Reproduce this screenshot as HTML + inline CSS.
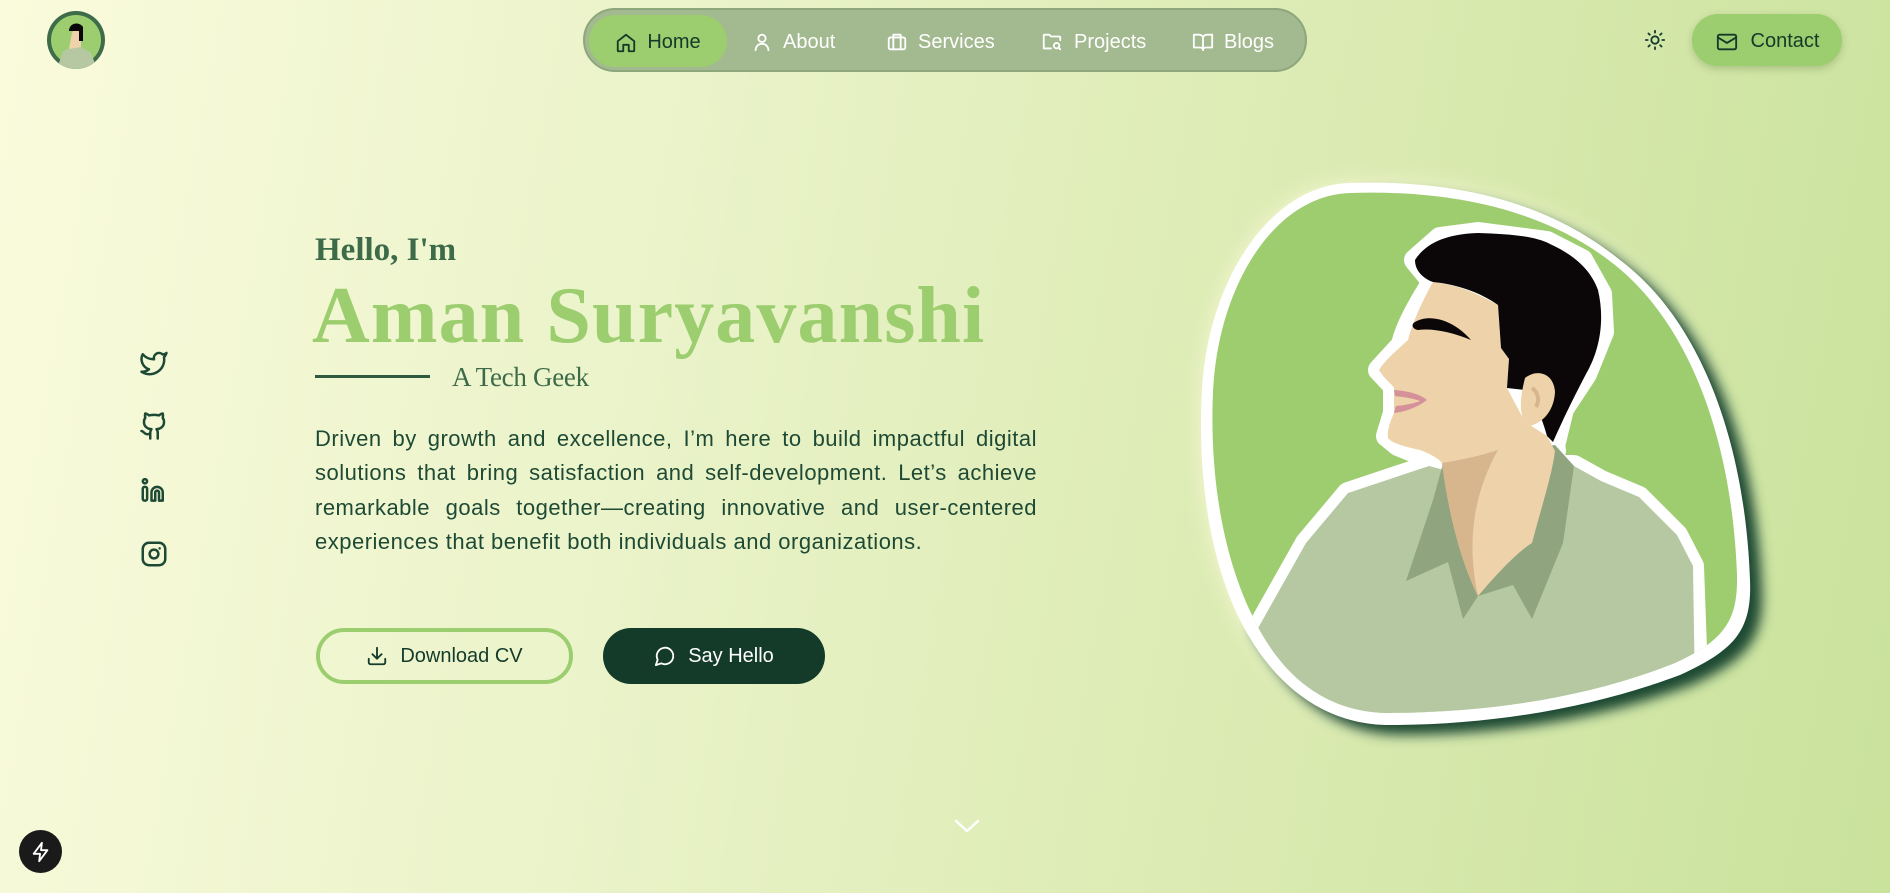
<!DOCTYPE html>
<html><head><meta charset="utf-8"><style>
*{margin:0;padding:0;box-sizing:border-box}
body{width:1890px;height:893px;overflow:hidden;position:relative;font-family:"Liberation Sans",sans-serif;background:linear-gradient(100deg,#fafbdc 0%,#eaf3c9 35%,#dcebb3 65%,#c9e29c 100%)}
.abs{position:absolute}
.nav{left:583px;top:8px;width:724px;height:64px;border-radius:32px;background:#a3b98f;border:2px solid #8ea67c;}
.nav .it{position:absolute;top:2px;height:60px;display:flex;align-items:center;gap:10px;color:#fff;font-size:20px}
.home{left:4px;top:5px!important;height:52px!important;width:138px;border-radius:26px;background:#9ccd6e;color:#143a2a!important;justify-content:center;padding-top:3px}
svg.i{fill:none;stroke:currentColor;stroke-width:2;stroke-linecap:round;stroke-linejoin:round}
.serif{font-family:"Liberation Serif",serif}
</style></head><body>
<div class="abs" style="left:47px;top:11px;width:58px;height:58px;border-radius:50%;background:#3e6b4a;overflow:hidden">
<svg width="58" height="58" viewBox="0 0 58 58"><circle cx="29" cy="29" r="25" fill="#9ccd6e"/><path d="M10 58 L16 40 L26 36 L34 36 L44 42 L50 58Z" fill="#b5c8a2"/><path d="M22 38 C24 28 24 24 26 20 L34 20 L34 36Z" fill="#eed3aa"/><path d="M22 20 C22 12 32 10 36 16 L36 30 L32 30 L32 20Z" fill="#0b0608"/></svg></div>

<div class="abs nav">
 <div class="it home"><svg class="i" width="22" height="22" viewBox="0 0 24 24"><path d="M3 10l9-7 9 7v10a1 1 0 0 1-1 1h-5v-7H9v7H4a1 1 0 0 1-1-1z"/></svg>Home</div>
 <div class="it" style="left:166px"><svg class="i" width="22" height="22" viewBox="0 0 24 24"><circle cx="12" cy="8" r="4"/><path d="M5 21c0-4 3-7 7-7s7 3 7 7"/></svg>About</div>
 <div class="it" style="left:301px"><svg class="i" width="22" height="22" viewBox="0 0 24 24"><rect x="3" y="7" width="18" height="13" rx="2"/><path d="M8 7V4h8v3M8 7v13M16 7v13"/></svg>Services</div>
 <div class="it" style="left:455px"><svg class="i" width="24" height="22" viewBox="0 0 24 24"><path d="M3 5a1 1 0 0 1 1-1h5l2 2h9a1 1 0 0 1 1 1v3M3 5v14h8"/><circle cx="17" cy="16" r="3"/><path d="M19 18l2 2"/></svg>Projects</div>
 <div class="it" style="left:607px"><svg class="i" width="22" height="22" viewBox="0 0 24 24"><path d="M2 4h6a4 4 0 0 1 4 4v13a3 3 0 0 0-3-3H2zM22 4h-6a4 4 0 0 0-4 4v13a3 3 0 0 1 3-3h7z"/></svg>Blogs</div>
</div>

<svg class="abs i" style="left:1644px;top:29px;color:#143a2a" width="22" height="22" viewBox="0 0 24 24"><circle cx="12" cy="12" r="4"/><path d="M12 2v2M12 20v2M4.9 4.9l1.4 1.4M17.7 17.7l1.4 1.4M2 12h2M20 12h2M4.9 19.1l1.4-1.4M17.7 6.3l1.4-1.4"/></svg>
<div class="abs" style="left:1692px;top:14px;width:150px;height:52px;border-radius:26px;background:#9ccd6e;box-shadow:0 3px 8px rgba(60,90,40,.25);display:flex;align-items:center;justify-content:center;gap:12px;color:#143a2a;font-size:20px;padding-top:3px"><svg class="i" width="24" height="22" viewBox="0 0 24 24"><rect x="2" y="4" width="20" height="16" rx="2"/><path d="M2 7l10 6 10-6"/></svg>Contact</div>

<div class="abs" style="left:139px;top:348px;color:#1e4a35">
<svg class="i abs" style="top:0" width="30" height="30" viewBox="0 0 24 24"><path d="M22 4s-.7 2.1-2 3.4c1.6 10-9.4 17.3-18 11.6 2.2.1 4.4-.6 6-2C3 15.5.5 9.6 3 5c2.2 2.6 5.6 4.1 9 4-.9-4.2 4-6.6 7-3.8 1.1 0 3-1.2 3-1.2z"/></svg>
<svg class="i abs" style="top:63px" width="30" height="30" viewBox="0 0 24 24"><path d="M15 22v-4a4.8 4.8 0 0 0-1-3.5c3 0 6-2 6-5.5.1-1.3-.3-2.5-1-3.5.3-1.2.3-2.4 0-3.5 0 0-1 0-3 1.5-2.6-.5-5.3-.5-8 0C6 2 5 2 5 2c-.3 1.1-.3 2.3 0 3.5A5.4 5.4 0 0 0 4 9c0 3.5 3 5.5 6 5.5-.4.5-.7 1.1-.8 1.7-.2.6-.3 1.2-.2 1.8v4"/><path d="M9 18c-4.5 2-5-2-7-2"/></svg>
<svg class="i abs" style="top:127px" width="30" height="30" viewBox="0 0 24 24"><rect x="3" y="9.5" width="3.5" height="11" rx="1.5"/><circle cx="4.75" cy="5" r="1.7"/><path d="M10 20.5V14a4.5 4.5 0 0 1 9 0v6.5h-3V14a1.5 1.5 0 0 0-3 0v6.5z"/></svg>
<svg class="i abs" style="top:191px" width="30" height="30" viewBox="0 0 24 24"><rect x="3" y="3" width="18" height="18" rx="5"/><circle cx="12" cy="12" r="3.5"/><path d="M16.5 7.5v.01"/></svg>
</div>

<div class="abs serif" style="left:315px;top:232px;font-size:33px;font-weight:bold;color:#3d6a48">Hello, I'm</div>
<div class="abs serif" style="left:312px;top:271px;font-size:80px;font-weight:bold;color:#9ccd6e;letter-spacing:1.1px;white-space:nowrap">Aman Suryavanshi</div>
<div class="abs" style="left:315px;top:375px;width:115px;height:3px;background:#2e5a3f"></div>
<div class="abs serif" style="left:452px;top:362px;font-size:27px;color:#3d6a48;letter-spacing:-0.3px">A Tech Geek</div>
<div class="abs" style="left:315px;top:422px;width:722px;font-size:22px;letter-spacing:0.5px;line-height:34.3px;color:#1e4a35;text-align:justify">Driven by growth and excellence, I’m here to build impactful digital solutions that bring satisfaction and self-development. Let’s achieve remarkable goals together—creating innovative and user-centered experiences that benefit both individuals and organizations.</div>

<div class="abs" style="left:316px;top:628px;width:257px;height:56px;border:4px solid #9ccd6e;border-radius:28px;display:flex;align-items:center;justify-content:center;gap:12px;color:#143a2a;font-size:20px"><svg class="i" width="22" height="22" viewBox="0 0 24 24"><path d="M21 15v4a2 2 0 0 1-2 2H5a2 2 0 0 1-2-2v-4M7 10l5 5 5-5M12 15V3"/></svg>Download CV</div>
<div class="abs" style="left:603px;top:628px;width:222px;height:56px;background:#143a2a;border-radius:28px;display:flex;align-items:center;justify-content:center;gap:12px;color:#fff;font-size:20px"><svg class="i" width="22" height="22" viewBox="0 0 24 24"><path d="M7.9 20A9 9 0 1 0 4 16.1L2 22z"/></svg>Say Hello</div>

<svg class="abs i" style="left:952px;top:815px;color:#fff" width="30" height="24" viewBox="0 0 30 24"><path d="M4 6l11 10 11-10" stroke-width="2.5"/></svg>
<div class="abs" style="left:19px;top:830px;width:43px;height:43px;border-radius:50%;background:#1a1a1a;display:flex;align-items:center;justify-content:center"><svg class="i" width="22" height="22" viewBox="0 0 24 24" style="color:#fff"><path d="M13 2L4 14h7l-1 8 9-12h-7z"/></svg></div>

<svg class="abs" style="left:1180px;top:160px" width="600" height="600" viewBox="0 0 600 600">
<defs>
<filter id="sh" x="-20%" y="-20%" width="140%" height="140%"><feGaussianBlur stdDeviation="6"/></filter>
<filter id="gl" x="-20%" y="-20%" width="140%" height="140%"><feGaussianBlur stdDeviation="10"/></filter>
<clipPath id="cp"><path d="M170,33 C260,30 360,45 435,105 C510,165 552,280 557,415 C558,460 545,480 495,503 C415,535 320,552 210,553 C145,553 100,515 72,455 C38,385 30,300 33,232 C38,125 95,35 170,33 Z"/></clipPath>
</defs>
<path d="M170,23 C260,20 360,35 440,100 C520,160 565,280 570,420 C572,470 555,490 500,515 C420,545 320,565 210,565 C140,565 90,520 60,460 C25,390 18,300 22,230 C28,120 90,25 170,23 Z" fill="#fffbe0" opacity=".7" filter="url(#gl)"/>
<path d="M182,33 C272,30 372,45 452,110 C532,170 577,290 582,430 C584,480 567,500 512,525 C432,555 332,575 222,575 C152,575 102,530 72,470 Z" fill="#1b4a30" filter="url(#sh)"/>
<path d="M170,23 C260,20 360,35 440,100 C520,160 565,280 570,420 C572,470 555,490 500,515 C420,545 320,565 210,565 C140,565 90,520 60,460 C25,390 18,300 22,230 C28,120 90,25 170,23 Z" fill="#fff"/>
<path d="M170,33 C260,30 360,45 435,105 C510,165 552,280 557,415 C558,460 545,480 495,503 C415,535 320,552 210,553 C145,553 100,515 72,455 C38,385 30,300 33,232 C38,125 95,35 170,33 Z" fill="#9ecd6f"/>
<g clip-path="url(#cp)">
<g stroke="#fff" stroke-width="22" stroke-linejoin="round" fill="#fff">
<path d="M235,100 L260,78 L298,73 L367,82 L402,100 L421,134 L423,172 L406,214 L383,249 L373,290 L367,276 L330,250 L300,300 L253,122 Z"/>
<path d="M253,122 C235,150 225,170 222,185 L199,210 L214,226 L214,253 L207,276 L218,285 L260,302 L300,340 L375,291 L373,276 Z"/>
<path d="M77,470 L126,383 L168,333 L249,306 L394,306 L421,321 L459,337 L497,375 L513,406 L520,600 L60,600 Z"/>
</g>
<path d="M77,470 L126,383 L168,333 L249,306 L264,310 L394,306 L421,321 L459,337 L497,375 L513,406 L516,600 L60,600 Z" fill="#b5c8a2"/>
<path d="M264,300 L253,340 L226,421 L268,402 L283,459 L298,436 L333,425 L352,459 L383,383 L394,306 L375,285 Z" fill="#8fa47f"/>
<path d="M253,122 C240,145 232,165 228,180 C215,192 205,200 199,210 C205,220 212,224 214,228 L214,253 C210,262 207,270 208,278 C212,283 222,286 240,290 C250,294 258,298 262,303 C268,350 280,400 298,436 C320,410 340,390 352,383 C362,345 372,315 375,291 L367,276 L345,262 L327,228 L329,199 L321,188 L318,145 C300,135 280,125 253,122 Z" fill="#eed3aa"/>
<path d="M262,303 C268,350 280,400 298,436 C288,390 290,340 318,290 C300,296 280,300 262,303 Z" fill="#d7b68e"/>
<path d="M214,230 C228,231 240,234 247,240 C238,247 225,252 214,253 L216,246 C226,245 236,243 240,241 C232,238 222,237 215,236 Z" fill="#d4919a"/>
<path d="M235,100 C245,84 265,74 298,73 C330,74 355,76 370,84 C392,94 410,108 418,130 C425,160 420,190 406,214 C395,235 385,255 373,282 L367,276 C360,250 350,235 345,230 L327,228 L329,199 L321,188 L318,145 C300,132 275,124 253,122 C242,118 235,110 235,100 Z" fill="#0b0608"/>
<path d="M235,162 C248,154 272,158 291,180 C272,172 252,168 238,170 C232,169 231,164 235,162 Z" fill="#0b0608"/>
<path d="M345,218 C358,208 374,214 375,232 C374,250 364,262 350,266 C340,262 338,245 345,218 Z" fill="#eed3aa"/>
<path d="M352,228 C358,232 360,240 356,247" stroke="#d7b68e" stroke-width="4" fill="none"/>
</g>
</svg>
</body></html>
